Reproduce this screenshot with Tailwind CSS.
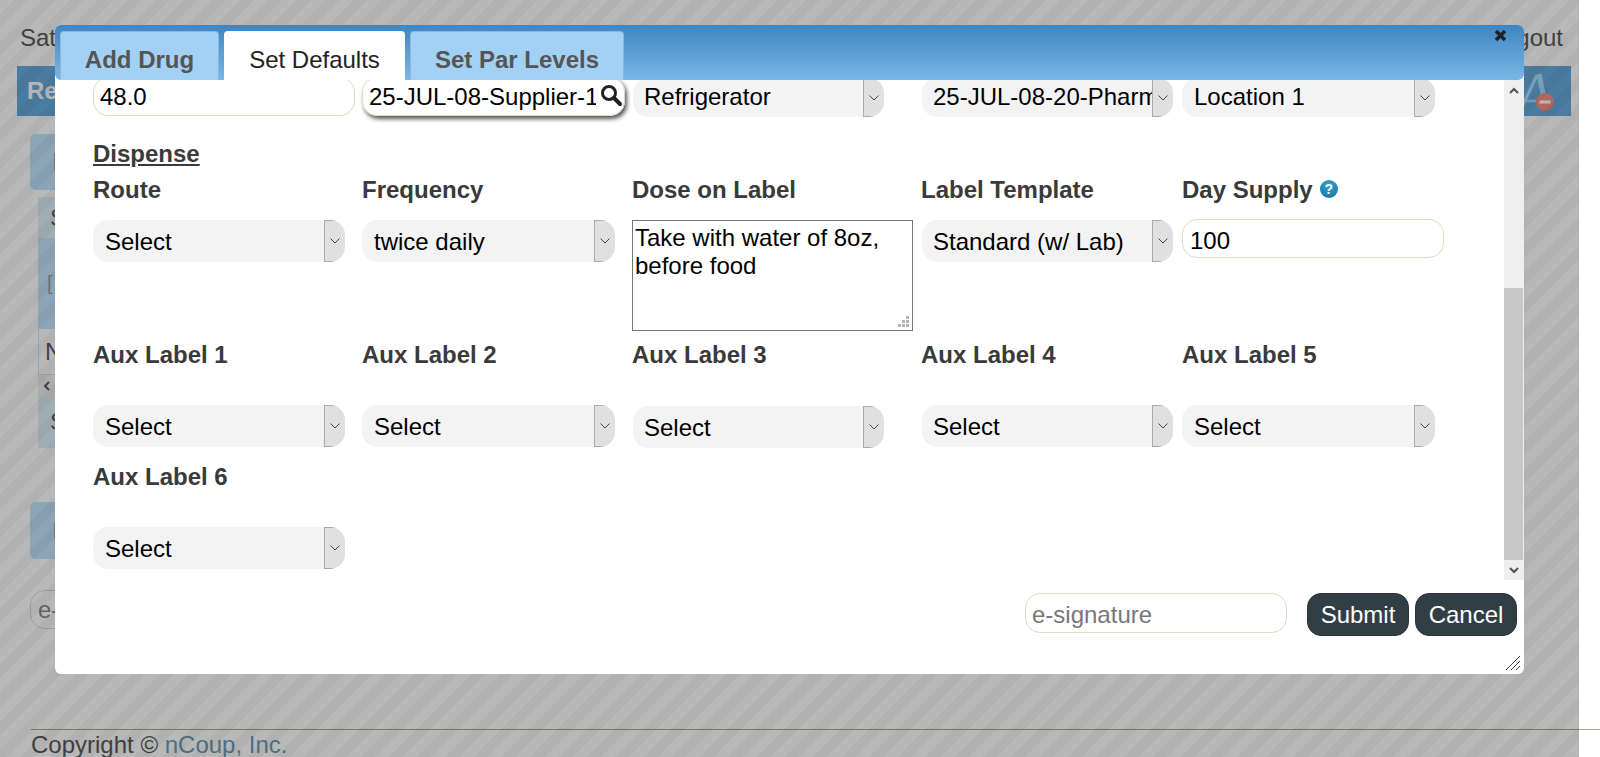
<!DOCTYPE html>
<html lang="en">
<head>
<meta charset="utf-8">
<title>Set Defaults</title>
<script src="https://cdn.jsdelivr.net/npm/@tailwindcss/browser@4"></script>
</head>
<body>
<div class="relative h-[757px] overflow-hidden bg-white font-['Liberation_Sans',Arial,sans-serif] text-[24px] leading-[28px] text-[#5a5a5a]">

  <!-- page behind the dialog -->
  <div class="flex flex-col">
    <div class="flex justify-between pt-[24px] pl-[20px] pr-[37px]">
      <span>Sat</span><span>Logout</span>
    </div>
    <div class="mt-[14px] ml-[17px] flex h-[50px] w-[1554px] items-center justify-between bg-[#67abe0] pl-[10px] pr-[10px]">
      <span class="font-bold text-white">Re</span>
      <svg class="h-[42px] w-[46px]" viewBox="0 0 46 42"><path d="M7 37 L22 5" fill="none" stroke="#a9dcff" stroke-width="3"/><path d="M24 4 L30 34" fill="none" stroke="#a9dcff" stroke-width="5"/><path d="M10 31 L28 31" fill="none" stroke="#a9dcff" stroke-width="2.500"/><circle cx="30" cy="32" r="9" fill="#f98f7f"/><rect x="24.500" y="30.500" width="11" height="3" fill="#fff"/></svg>
    </div>
    <div class="mt-[18px] ml-[30px] flex h-[56px] w-[1400px] items-center rounded-[6px] bg-[#bfe5ff] pl-[23px] font-bold">I</div>
    <div class="mt-[7px] ml-[38px] flex w-[1400px] flex-col">
      <div class="flex h-[41px] items-center bg-[#dff0fb] pl-[12px]">S</div>
      <div class="flex h-[90px] items-center bg-[#c1e5ff] pl-[9px] text-[20px] text-[#a0a0a0]">[</div>
      <div class="flex h-[47px] items-center border border-[#c5e6fb] bg-white pl-[6px]">N</div>
      <div class="flex h-[21px] items-center bg-[#efefef] pl-[5px]"><svg class="h-[10px] w-[8px]" viewBox="0 0 8 10"><path d="M6 1 L2 5 L6 9" fill="none" stroke="#555" stroke-width="2"/></svg></div>
      <div class="flex h-[52px] items-center bg-[#dff0fb] pl-[12px]">S</div>
    </div>
    <div class="mt-[54px] ml-[30px] flex h-[57px] w-[1400px] items-center rounded-[6px] bg-[#bfe5ff] pl-[23px] font-bold">I</div>
    <div class="mt-[31px] ml-[30px] flex h-[39px] w-[262px] items-center rounded-[15px] border border-[#dcdcc0] pl-[7px] text-[#888]">e-signature</div>
    <div class="mt-[100px] ml-[31px] border-t border-[#a6a68f] pt-[1px]">Copyright © <span class="text-[#6e9ab5]">nCoup, Inc.</span></div>
  </div>

  <!-- modal overlay -->
  <div class="absolute inset-y-0 left-0 w-[1579px] bg-[repeating-linear-gradient(135deg,rgba(0,0,0,0.28)_0,rgba(0,0,0,0.28)_10px,rgba(0,0,0,0.305)_10px,rgba(0,0,0,0.305)_20px)]"></div>

  <!-- dialog -->
  <div class="absolute top-[25px] left-[55px] flex h-[649px] w-[1469px] flex-col rounded-[6px] bg-white">
    <div class="relative z-10 flex h-[55px] shrink-0 items-end gap-[5px] rounded-[6px] bg-gradient-to-b from-[#3c86c2] to-[#7ab7e6] pl-[5px]">
      <div class="flex h-[49px] w-[159px] items-center justify-center rounded-t-[4px] border border-b-0 border-[#8fb6d4] bg-[#a3d1f5] pt-[8px] font-bold text-[#555]">Add Drug</div>
      <div class="flex h-[49px] w-[181px] items-center justify-center rounded-t-[4px] bg-white pt-[8px] text-[#222]">Set Defaults</div>
      <div class="flex h-[49px] w-[214px] items-center justify-center rounded-t-[4px] border border-b-0 border-[#8fb6d4] bg-[#a3d1f5] pt-[8px] font-bold text-[#555]">Set Par Levels</div>
      <svg class="absolute top-[4px] right-[17px] h-[13px] w-[13px]" viewBox="0 0 13 13"><path d="M2 2 L11 11 M11 2 L2 11" stroke="#222" stroke-width="3.600"/></svg>
    </div>

    <div class="flex h-[500px] shrink-0">
      <div class="flex-1 overflow-hidden pl-[38px] text-[#3a3a3a]">
        <!-- first row, scrolled partly under the header -->
        <div class="-mt-[3px] grid grid-cols-[269px_270px_289px_261px_262px] items-start">
          <input class="h-[39px] w-[262px] rounded-[15px] border border-[#dcdcc0] pl-[6px] text-black outline-none" value="48.0">
          <div class="relative h-[39px] w-[263px]">
            <input class="h-[39px] w-full rounded-[15px] border border-[#dcdcc0] pl-[6px] pr-[28px] text-black shadow-[2px_3px_4px_#555] outline-none" value="25-JUL-08-Supplier-1">
            <svg class="absolute top-[6px] right-[2px] h-[24px] w-[24px]" viewBox="0 0 24 24"><circle cx="10" cy="10" r="6.500" fill="#fff" stroke="#222" stroke-width="3"/><path d="M15 15 L21 21" stroke="#222" stroke-width="4" stroke-linecap="round"/></svg>
          </div>
          <div class="mt-[1px] ml-[1px] flex h-[39px] w-[251px] overflow-hidden rounded-[15px] bg-[#f3f3f3] text-black"><span class="flex-1 overflow-hidden pl-[11px] leading-[38px] whitespace-nowrap">Refrigerator</span><span class="flex w-[21px] shrink-0 items-center justify-center border border-r-0 border-[#aaa] bg-[#e0e0e0]"><svg class="h-[6px] w-[10px]" viewBox="0 0 10 6"><path d="M0.500 0.500 L5 5 L9.500 0.500" fill="none" stroke="#444"/></svg></span></div>
          <div class="mt-[1px] ml-[1px] flex h-[39px] w-[251px] overflow-hidden rounded-[15px] bg-[#f3f3f3] text-black"><span class="flex-1 overflow-hidden pl-[11px] leading-[38px] whitespace-nowrap">25-JUL-08-20-Pharmacy</span><span class="flex w-[21px] shrink-0 items-center justify-center border border-r-0 border-[#aaa] bg-[#e0e0e0]"><svg class="h-[6px] w-[10px]" viewBox="0 0 10 6"><path d="M0.500 0.500 L5 5 L9.500 0.500" fill="none" stroke="#444"/></svg></span></div>
          <div class="mt-[1px] flex h-[39px] w-[253px] overflow-hidden rounded-[15px] bg-[#f3f3f3] text-black"><span class="flex-1 overflow-hidden pl-[12px] leading-[38px] whitespace-nowrap">Location 1</span><span class="flex w-[21px] shrink-0 items-center justify-center border border-r-0 border-[#aaa] bg-[#e0e0e0]"><svg class="h-[6px] w-[10px]" viewBox="0 0 10 6"><path d="M0.500 0.500 L5 5 L9.500 0.500" fill="none" stroke="#444"/></svg></span></div>
        </div>

        <div class="mt-[23px] font-bold underline">Dispense</div>

        <div class="mt-[8px] grid grid-cols-[269px_270px_289px_261px_262px] items-start">
          <div><div class="mb-[16px] font-bold">Route</div>
            <div class="flex h-[42px] w-[252px] overflow-hidden rounded-[15px] bg-[#f3f3f3] text-black"><span class="flex-1 pl-[12px] leading-[44px]">Select</span><span class="flex w-[21px] items-center justify-center border border-r-0 border-[#aaa] bg-[#e0e0e0]"><svg class="h-[6px] w-[10px]" viewBox="0 0 10 6"><path d="M0.500 0.500 L5 5 L9.500 0.500" fill="none" stroke="#444"/></svg></span></div></div>
          <div><div class="mb-[16px] font-bold">Frequency</div>
            <div class="flex h-[42px] w-[253px] overflow-hidden rounded-[15px] bg-[#f3f3f3] text-black"><span class="flex-1 pl-[12px] leading-[44px]">twice daily</span><span class="flex w-[21px] items-center justify-center border border-r-0 border-[#aaa] bg-[#e0e0e0]"><svg class="h-[6px] w-[10px]" viewBox="0 0 10 6"><path d="M0.500 0.500 L5 5 L9.500 0.500" fill="none" stroke="#444"/></svg></span></div></div>
          <div><div class="mb-[16px] font-bold">Dose on Label</div>
            <div class="relative h-[111px] w-[281px]">
              <textarea class="block h-[111px] w-full resize-none rounded-none border border-[#767676] pt-[3px] pr-[1px] pl-[2px] leading-[28px] text-black outline-none">Take with water of 8oz, before food</textarea>
              <svg class="absolute right-[4px] bottom-[4px] h-[11px] w-[11px]" viewBox="0 0 11 11"><path d="M8 0h3v3H8z M4 4h3v3H4z M8 4h3v3H8z M0 8h3v3H0z M4 8h3v3H4z M8 8h3v3H8z" fill="#b5b5b5"/></svg>
            </div></div>
          <div><div class="mb-[16px] font-bold">Label Template</div>
            <div class="ml-[1px] flex h-[42px] w-[251px] overflow-hidden rounded-[15px] bg-[#f3f3f3] text-black"><span class="flex-1 pl-[11px] leading-[44px] whitespace-nowrap">Standard (w/ Lab)</span><span class="flex w-[21px] shrink-0 items-center justify-center border border-r-0 border-[#aaa] bg-[#e0e0e0]"><svg class="h-[6px] w-[10px]" viewBox="0 0 10 6"><path d="M0.500 0.500 L5 5 L9.500 0.500" fill="none" stroke="#444"/></svg></span></div></div>
          <div><div class="mb-[15px] flex items-center gap-[7px] font-bold">Day Supply<span class="-mt-[3px] flex h-[18px] w-[18px] items-center justify-center rounded-full bg-[radial-gradient(circle_at_50%_30%,#35a5d3,#0f6f9c)] text-[14px] leading-[18px] text-white">?</span></div>
            <input class="h-[39px] w-[262px] rounded-[15px] border border-[#dcdcc0] pt-[5px] pl-[7px] text-black outline-none" value="100"></div>
        </div>

        <div class="mt-[10px] grid grid-cols-[269px_270px_289px_261px_262px] items-start">
          <div><div class="mb-[36px] font-bold">Aux Label 1</div>
            <div class="flex h-[42px] w-[252px] overflow-hidden rounded-[15px] bg-[#f3f3f3] text-black"><span class="flex-1 pl-[12px] leading-[44px]">Select</span><span class="flex w-[21px] items-center justify-center border border-r-0 border-[#aaa] bg-[#e0e0e0]"><svg class="h-[6px] w-[10px]" viewBox="0 0 10 6"><path d="M0.500 0.500 L5 5 L9.500 0.500" fill="none" stroke="#444"/></svg></span></div></div>
          <div><div class="mb-[36px] font-bold">Aux Label 2</div>
            <div class="flex h-[42px] w-[253px] overflow-hidden rounded-[15px] bg-[#f3f3f3] text-black"><span class="flex-1 pl-[12px] leading-[44px]">Select</span><span class="flex w-[21px] items-center justify-center border border-r-0 border-[#aaa] bg-[#e0e0e0]"><svg class="h-[6px] w-[10px]" viewBox="0 0 10 6"><path d="M0.500 0.500 L5 5 L9.500 0.500" fill="none" stroke="#444"/></svg></span></div></div>
          <div><div class="mb-[37px] font-bold">Aux Label 3</div>
            <div class="ml-[1px] flex h-[42px] w-[251px] overflow-hidden rounded-[15px] bg-[#f3f3f3] text-black"><span class="flex-1 pl-[11px] leading-[44px]">Select</span><span class="flex w-[21px] items-center justify-center border border-r-0 border-[#aaa] bg-[#e0e0e0]"><svg class="h-[6px] w-[10px]" viewBox="0 0 10 6"><path d="M0.500 0.500 L5 5 L9.500 0.500" fill="none" stroke="#444"/></svg></span></div></div>
          <div><div class="mb-[36px] font-bold">Aux Label 4</div>
            <div class="ml-[1px] flex h-[42px] w-[251px] overflow-hidden rounded-[15px] bg-[#f3f3f3] text-black"><span class="flex-1 pl-[11px] leading-[44px]">Select</span><span class="flex w-[21px] items-center justify-center border border-r-0 border-[#aaa] bg-[#e0e0e0]"><svg class="h-[6px] w-[10px]" viewBox="0 0 10 6"><path d="M0.500 0.500 L5 5 L9.500 0.500" fill="none" stroke="#444"/></svg></span></div></div>
          <div><div class="mb-[36px] font-bold">Aux Label 5</div>
            <div class="flex h-[42px] w-[253px] overflow-hidden rounded-[15px] bg-[#f3f3f3] text-black"><span class="flex-1 pl-[12px] leading-[44px]">Select</span><span class="flex w-[21px] items-center justify-center border border-r-0 border-[#aaa] bg-[#e0e0e0]"><svg class="h-[6px] w-[10px]" viewBox="0 0 10 6"><path d="M0.500 0.500 L5 5 L9.500 0.500" fill="none" stroke="#444"/></svg></span></div></div>
        </div>

        <div class="mt-[15px]">
          <div class="mb-[36px] font-bold">Aux Label 6</div>
          <div class="flex h-[42px] w-[252px] overflow-hidden rounded-[15px] bg-[#f3f3f3] text-black"><span class="flex-1 pl-[12px] leading-[44px]">Select</span><span class="flex w-[21px] items-center justify-center border border-r-0 border-[#aaa] bg-[#e0e0e0]"><svg class="h-[6px] w-[10px]" viewBox="0 0 10 6"><path d="M0.500 0.500 L5 5 L9.500 0.500" fill="none" stroke="#444"/></svg></span></div>
        </div>
      </div>

      <!-- scrollbar -->
      <div class="flex w-[20px] shrink-0 flex-col bg-[#efefef]">
        <div class="flex h-[20px] items-center justify-center"><svg class="h-[7px] w-[10px]" viewBox="0 0 10 7"><path d="M1 6 L5 2 L9 6" fill="none" stroke="#505050" stroke-width="2"/></svg></div>
        <div class="mt-[188px] mr-[1px] h-[272px] bg-[#c8c8c8]"></div>
        <div class="mt-auto flex h-[20px] items-center justify-center"><svg class="h-[7px] w-[10px]" viewBox="0 0 10 7"><path d="M1 1 L5 5 L9 1" fill="none" stroke="#505050" stroke-width="2"/></svg></div>
      </div>
    </div>

    <div class="relative flex flex-1 items-start justify-end pt-[13px] pr-[7px]">
      <input class="mr-[20px] h-[40px] w-[262px] rounded-[15px] border border-[#dcdcc0] pt-[3px] pl-[6px] text-black outline-none placeholder:text-[#777]" placeholder="e-signature">
      <button class="mr-[6px] h-[43px] w-[102px] rounded-[14px] border border-[#2a343a] bg-[#323e45] text-white">Submit</button>
      <button class="h-[43px] w-[102px] rounded-[14px] border border-[#2a343a] bg-[#323e45] text-white">Cancel</button>
      <svg class="absolute right-[3px] bottom-[3px] h-[16px] w-[16px]" viewBox="0 0 16 16"><path d="M1 15 L15 1 M6 15 L15 6 M11 15 L15 11" stroke="#444" stroke-width="1"/></svg>
    </div>
  </div>
</div>
</body>
</html>
